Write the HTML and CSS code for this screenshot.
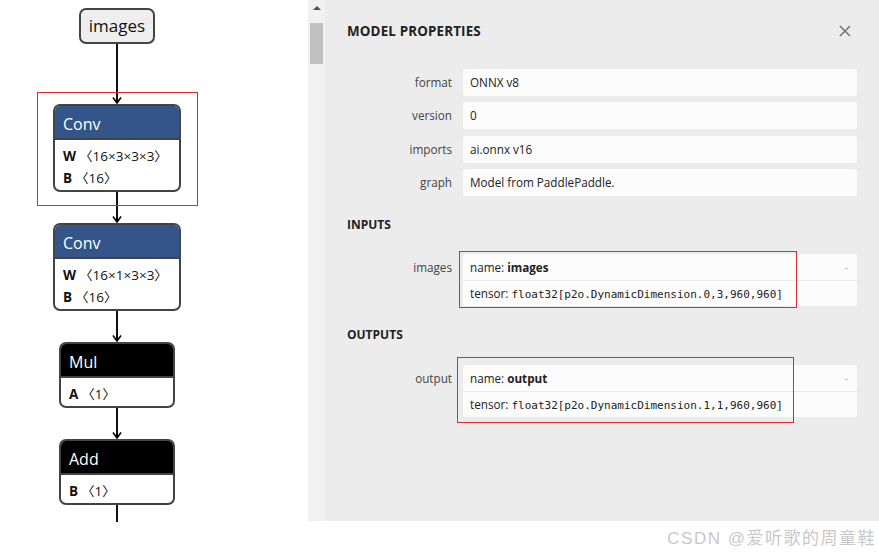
FILE: index.html
```html
<!DOCTYPE html>
<html>
<head>
<meta charset="utf-8">
<link rel="stylesheet" href="styles.css">
</head>
<body>
<div class="app">
  <div class="main">
    <div class="graph">
      <div class="graph-col">
        <div class="input-node">images</div>
        <div class="edge e-long"><div class="line"></div><svg class="head" viewBox="0 0 10 7"><path d="M1 0.5 L5 6 L9 0.5" fill="none" stroke="#000" stroke-width="1.6"/><path d="M5 1 L5 6" stroke="#000" stroke-width="2"/></svg></div>
        <div class="op">
          <div class="op-head conv">Conv</div>
          <div class="op-body">
            <div class="attr"><b>W</b> <span class="ang">〈</span>16×3×3×3<span class="ang">〉</span></div>
            <div class="attr"><b>B</b> <span class="ang">〈</span>16<span class="ang">〉</span></div>
          </div>
        </div>
        <div class="edge"><div class="line"></div><svg class="head" viewBox="0 0 10 7"><path d="M1 0.5 L5 6 L9 0.5" fill="none" stroke="#000" stroke-width="1.6"/><path d="M5 1 L5 6" stroke="#000" stroke-width="2"/></svg></div>
        <div class="op">
          <div class="op-head conv">Conv</div>
          <div class="op-body">
            <div class="attr"><b>W</b> <span class="ang">〈</span>16×1×3×3<span class="ang">〉</span></div>
            <div class="attr"><b>B</b> <span class="ang">〈</span>16<span class="ang">〉</span></div>
          </div>
        </div>
        <div class="edge"><div class="line"></div><svg class="head" viewBox="0 0 10 7"><path d="M1 0.5 L5 6 L9 0.5" fill="none" stroke="#000" stroke-width="1.6"/><path d="M5 1 L5 6" stroke="#000" stroke-width="2"/></svg></div>
        <div class="op small">
          <div class="op-head black">Mul</div>
          <div class="op-body">
            <div class="attr"><b>A</b> <span class="ang">〈</span>1<span class="ang">〉</span></div>
          </div>
        </div>
        <div class="edge"><div class="line"></div><svg class="head" viewBox="0 0 10 7"><path d="M1 0.5 L5 6 L9 0.5" fill="none" stroke="#000" stroke-width="1.6"/><path d="M5 1 L5 6" stroke="#000" stroke-width="2"/></svg></div>
        <div class="op small">
          <div class="op-head black">Add</div>
          <div class="op-body">
            <div class="attr"><b>B</b> <span class="ang">〈</span>1<span class="ang">〉</span></div>
          </div>
        </div>
        <div class="edge tail"><div class="line"></div></div>
      </div>
    </div>
    <div class="scrollbar">
      <div class="sb-arrow"></div>
      <div class="sb-thumb"></div>
    </div>
    <div class="panel">
      <div class="panel-head">
        <div class="title">MODEL PROPERTIES</div>
        <svg class="close" viewBox="0 0 12 12"><path d="M1 1 L11 11 M11 1 L1 11" stroke="#777" stroke-width="1.6" fill="none"/></svg>
      </div>
      <div class="props">
        <div class="label">format</div><div class="value">ONNX v8</div>
        <div class="label">version</div><div class="value">0</div>
        <div class="label">imports</div><div class="value">ai.onnx v16</div>
        <div class="label">graph</div><div class="value">Model from PaddlePaddle.</div>
      </div>
      <div class="section">INPUTS</div>
      <div class="arg-row">
        <div class="arg-label">images</div>
        <div class="arg">
          <div class="arg-name"><span>name: <b>images</b></span><span class="dash">-</span></div>
          <div class="arg-type">tensor: <code>float32[p2o.DynamicDimension.0,3,960,960]</code></div>
        </div>
      </div>
      <div class="section">OUTPUTS</div>
      <div class="arg-row out">
        <div class="arg-label">output</div>
        <div class="arg">
          <div class="arg-name"><span>name: <b>output</b></span><span class="dash">-</span></div>
          <div class="arg-type">tensor: <code>float32[p2o.DynamicDimension.1,1,960,960]</code></div>
        </div>
      </div>
    </div>
  </div>
  <div class="footer"><span class="watermark">CSDN @爱听歌的周童鞋</span></div>
  <div class="mark mark-conv"></div>
  <div class="mark mark-in"></div>
  <div class="mark mark-out"></div>
</div>
</body>
</html>
```

FILE: styles.css
```css
* { box-sizing: border-box; }
html, body { margin: 0; padding: 0; background: #fff; }
body { font-family: "Open Sans", "Noto Sans", sans-serif; color: #222; }

.app { position: relative; width: 879px; height: 552px; overflow: hidden; }
.main { display: flex; height: 521px; }

/* graph */
.graph { width: 308px; background: #fff; }
.graph-col { width: 234px; display: flex; flex-direction: column; align-items: center; padding-top: 8px; }

.input-node {
  width: 76px; height: 36px;
  background: #eee; border: 2px solid #444; border-radius: 7px;
  font-size: 17px; line-height: 31px; text-align: center; color: #111;
}

.edge { display: flex; flex-direction: column; align-items: center; height: 31px; }
.edge.e-long { height: 60px; }
.edge.tail { height: 17px; }
.edge .line { width: 2px; background: #111; flex: 1; }
.edge .head { width: 10px; height: 7px; display: block; margin-top: -6px; }

.op { width: 128px; border: 2px solid #444; border-radius: 7px; overflow: hidden; background: #fff; }
.op.small { width: 116px; }
.op-head {
  height: 34px; padding: 2px 0 0 8px;
  font-size: 16px; line-height: 32px; color: #fff;
  border-bottom: 2px solid #444;
}
.op-head.conv { background: #345589; }
.op-head.black { background: #000; }
.op-body { padding: 5px 8px 1px; }
.attr { font-size: 13.5px; line-height: 22px; color: #111; white-space: nowrap; }
.attr b { font-weight: 700; }
.ang { font-family: "Noto Sans CJK SC", sans-serif; font-size: 13px; }

/* scrollbar */
.scrollbar { width: 17px; background: #f1f1f1; position: relative; display: flex; flex-direction: column; align-items: center; }
.sb-arrow {
  margin-top: 6px; width: 0; height: 0;
  border-left: 4px solid transparent; border-right: 4px solid transparent;
  border-bottom: 4px solid #505050;
}
.sb-thumb { margin-top: 13px; width: 13px; height: 41px; background: #c1c1c1; }

/* panel */
.panel { flex: 1; background: #ececec; padding: 21px 22px 0 22px; }
.panel-head { display: flex; justify-content: space-between; align-items: center; height: 20px; }
.title { font-size: 13.4px; font-weight: 700; color: #222; letter-spacing: 0.15px; }
.close { width: 12px; height: 12px; margin-right: 6px; }

.props {
  margin-top: 28px;
  display: grid; grid-template-columns: 105px 1fr;
  column-gap: 11px; row-gap: 6.33px;
  grid-auto-rows: 27px;
}
.label { font-size: 11.7px; line-height: 27px; text-align: right; color: #444; }
.value {
  background: #fcfcfc; border-radius: 3px;
  font-size: 11.7px; line-height: 27px; padding-left: 7px; color: #222;
}

.section { font-size: 12px; font-weight: 700; line-height: 16px; color: #222; margin-top: 21px; }
.arg-row { display: grid; grid-template-columns: 105px 1fr; column-gap: 11px; margin-top: 21px; }
.arg-row.out { margin-top: 22px; }
.arg-label { font-size: 11.7px; line-height: 26px; text-align: right; color: #444; }
.arg { background: #fcfcfc; border-radius: 3px; }
.arg-name {
  height: 27px; border-bottom: 1px solid #ececec;
  display: flex; justify-content: space-between; align-items: center;
  padding: 0 9px 0 7px; font-size: 11.7px; color: #222;
}
.arg-name b { font-weight: 700; }
.dash { color: #aaa; font-size: 11px; }
.arg-type { height: 25px; line-height: 25px; padding-left: 7px; font-size: 11.7px; color: #222; }
.arg-type code { font-family: "DejaVu Sans Mono", "Liberation Mono", monospace; font-size: 11px; }

/* footer */
.footer { height: 31px; background: #fff; display: flex; justify-content: flex-end; align-items: center; padding-right: 3px; }
.watermark { font-family: "Liberation Sans", "Noto Sans CJK SC", sans-serif; font-size: 17px; color: #c8c8c8; letter-spacing: 1.5px; }

/* annotation marks */
.mark { position: absolute; border: 1px solid #e3262f; }
.mark-conv { left: 37px; top: 92px; width: 161px; height: 114px; }
.mark-in { left: 459px; top: 251px; width: 338px; height: 57px; }
.mark-out { left: 457px; top: 357px; width: 337px; height: 66px; }
```
